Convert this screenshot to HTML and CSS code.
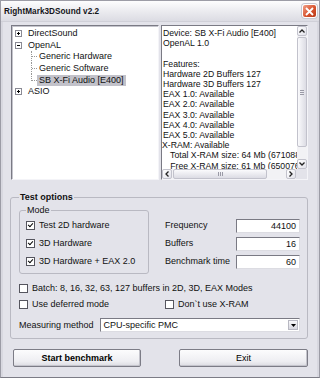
FILE: index.html
```html
<!DOCTYPE html>
<html lang="en">
<head>
    <meta charset="UTF-8">
    <title>RightMark3DSound v2.2</title>
    <link rel="stylesheet" href="styles.css">
</head>
<body>

    <div class="window">
        <!-- Title bar -->
        <div class="titlebar">
            <span class="title">RightMark3DSound v2.2</span>
            <span class="close-btn">
                <svg width="9" height="9" viewBox="0 0 9 9"><path d="M1 1L8 8M8 1L1 8" stroke="#fff" stroke-width="1.8"/></svg>
            </span>
        </div>

        <div class="client">
            <!-- Device tree + info -->
            <div class="panels">
                <div class="tree">
                    <div class="node">
                        <svg class="exp" width="7" height="7" viewBox="0 0 7 7"><rect x="0.5" y="0.5" width="6" height="6" fill="#fff" stroke="#8a8a94"/><path d="M2 3.5H5M3.5 2V5" stroke="#000"/></svg>
                        <span class="node-label">DirectSound</span>
                    </div>
                    <div class="node">
                        <svg class="exp" width="7" height="7" viewBox="0 0 7 7"><rect x="0.5" y="0.5" width="6" height="6" fill="#fff" stroke="#8a8a94"/><path d="M2 3.5H5" stroke="#000"/></svg>
                        <span class="node-label">OpenAL</span>
                    </div>
                    <div class="leaf"><span class="stub"></span><span class="node-label">Generic Hardware</span></div>
                    <div class="leaf"><span class="stub"></span><span class="node-label">Generic Software</span></div>
                    <div class="leaf last"><span class="stub"></span><span class="node-label selected">SB X-Fi Audio [E400]</span></div>
                    <div class="node">
                        <svg class="exp" width="7" height="7" viewBox="0 0 7 7"><rect x="0.5" y="0.5" width="6" height="6" fill="#fff" stroke="#8a8a94"/><path d="M2 3.5H5M3.5 2V5" stroke="#000"/></svg>
                        <span class="node-label">ASIO</span>
                    </div>
                </div>

                <div class="info">
                    <div class="info-view">
                        <div class="info-text">Device: SB X-Fi Audio [E400]
OpenAL 1.0

Features:
Hardware 2D Buffers 127
Hardware 3D Buffers 127
EAX 1.0: Available
EAX 2.0: Available
EAX 3.0: Available
EAX 4.0: Available
EAX 5.0: Available
<span class="flush">X-RAM: Available</span>
   Total X-RAM size: 64 Mb (67108864 bytes)
   Free X-RAM size: 61 Mb (65007616 bytes)</div>
                        <div class="vscroll">
                            <span class="sb-btn"><svg width="6" height="4" viewBox="0 0 6 4"><path d="M0.5 3.5L3 1L5.5 3.5" fill="none" stroke="#222" stroke-width="1.3"/></svg></span>
                            <div class="sb-track-v">
                                <span class="thumb-v"><span class="grip-v"></span></span>
                            </div>
                            <span class="sb-btn"><svg width="6" height="4" viewBox="0 0 6 4"><path d="M0.5 0.5L3 3L5.5 0.5" fill="none" stroke="#222" stroke-width="1.3"/></svg></span>
                        </div>
                    </div>
                    <div class="hscroll">
                        <span class="sb-btn"><svg width="4" height="6" viewBox="0 0 4 6"><path d="M3.5 0.5L1 3L3.5 5.5" fill="none" stroke="#222" stroke-width="1.3"/></svg></span>
                        <div class="sb-track-h">
                            <span class="thumb-h"><span class="grip-h"></span></span>
                        </div>
                        <span class="sb-btn"><svg width="4" height="6" viewBox="0 0 4 6"><path d="M0.5 0.5L3 3L0.5 5.5" fill="none" stroke="#222" stroke-width="1.3"/></svg></span>
                        <span class="sb-corner"></span>
                    </div>
                </div>
            </div>

            <!-- Test options -->
            <fieldset class="group options">
                <legend>Test options</legend>

                <div class="mode-row">
                    <fieldset class="group mode">
                        <legend>Mode</legend>
                        <div class="check-line"><span class="box checked"></span>Test 2D hardware</div>
                        <div class="check-line"><span class="box checked"></span>3D Hardware</div>
                        <div class="check-line"><span class="box checked"></span>3D Hardware + EAX 2.0</div>
                    </fieldset>

                    <div class="params">
                        <div class="param"><span class="param-label">Frequency</span><span class="field">44100</span></div>
                        <div class="param"><span class="param-label">Buffers</span><span class="field">16</span></div>
                        <div class="param"><span class="param-label">Benchmark time</span><span class="field">60</span></div>
                    </div>
                </div>

                <div class="opt-line batch"><span class="box"></span>Batch: 8, 16, 32, 63, 127 buffers in 2D, 3D, EAX Modes</div>
                <div class="opt-pair">
                    <div class="opt-line"><span class="box"></span>Use deferred mode</div>
                    <div class="opt-line"><span class="box"></span>Don`t use X-RAM</div>
                </div>

                <div class="method-row">
                    <span class="method-label">Measuring method</span>
                    <div class="select">
                        <span class="select-text">CPU-specific PMC</span>
                        <span class="select-btn"><svg width="5" height="3" viewBox="0 0 5 3"><path d="M0 0H5L2.5 3Z" fill="#000"/></svg></span>
                    </div>
                </div>
            </fieldset>

            <!-- Buttons -->
            <div class="buttons">
                <button class="btn btn-start">Start benchmark</button>
                <button class="btn">Exit</button>
            </div>
        </div>
    </div>

</body>
</html>
```

FILE: styles.css
```css
body {
    margin: 0;
    padding: 0;
    font-family: "Liberation Sans", Arial, sans-serif;
    font-size: 9px;
    color: #111;
    background: #ffffff;
}

/* Window frame */
.window {
    width: 320px;
    height: 378px;
    box-sizing: border-box;
    border: 1px solid #9c9ca6;
    border-bottom-color: #7c7c86;
    background: #e3e3ea;
    display: flex;
    flex-direction: column;
    overflow: hidden;
}

.titlebar {
    height: 20px;
    flex: none;
    display: flex;
    align-items: center;
    justify-content: space-between;
    padding: 0 2px 0 3px;
    background: linear-gradient(#fdfdfe, #ededf1 45%, #dcdce3);
    border-bottom: 1px solid #d0d0d8;
}

.title {
    font-weight: bold;
    font-size: 8.2px;
    color: #15151a;
    letter-spacing: 0.05px;
}

.close-btn {
    width: 15px;
    height: 14px;
    box-sizing: border-box;
    border: 1px solid #fff;
    border-radius: 3px;
    background: linear-gradient(135deg, #f0a088, #d8542f 55%, #b83818);
    display: flex;
    align-items: center;
    justify-content: center;
    box-shadow: 0 0 0 1px #c8c8d0;
}

.client {
    flex: 1;
    padding: 3px 9px 0 8px;
    border-left: 2px solid #d8d8e0;
    border-right: 2px solid #d8d8e0;
    display: flex;
    flex-direction: column;
}

/* Top panels */
.panels {
    display: flex;
    justify-content: space-between;
    height: 155px;
}

.tree {
    width: 148px;
    box-sizing: border-box;
    background: #fff;
    border: 1px solid #7a7a84;
    border-right-color: #f4f4f8;
    border-bottom-color: #f4f4f8;
    box-shadow: inset 1px 1px 0 #c4c4cc;
    padding: 2px 0 0 3px;
}

.node,
.leaf {
    height: 11.6px;
    display: flex;
    align-items: center;
}

.exp {
    flex: none;
    margin-right: 4px;
}

.node-label {
    padding: 0 2px;
    line-height: 11px;
}

.leaf {
    margin-left: 16px;
    border-left: 1px dotted #999;
}

.leaf.last {
    border-left: none;
    align-items: flex-start;
}

.stub {
    width: 5px;
    border-top: 1px dotted #999;
}

.leaf.last .stub {
    height: 5.5px;
    border-top: none;
    border-left: 1px dotted #999;
    border-bottom: 1px dotted #999;
}

.leaf.last .node-label {
    align-self: center;
    margin-top: 0.5px;
}

.selected {
    background: #c2c2ca;
}

.info {
    width: 147px;
    box-sizing: border-box;
    background: #fff;
    border: 1px solid #7a7a84;
    border-right-color: #f4f4f8;
    border-bottom-color: #f4f4f8;
    display: flex;
    flex-direction: column;
}

.info-view {
    flex: 1;
    display: flex;
    min-height: 0;
}

.info-text {
    flex: 1;
    overflow: hidden;
    white-space: pre;
    font-size: 8.7px;
    line-height: 10.2px;
    padding: 2px 0 0 1px;
}

.flush {
    margin-left: -1px;
}

/* Scroll bars */
.vscroll {
    width: 10px;
    flex: none;
    display: flex;
    flex-direction: column;
    background: #f2f2f5;
}

.hscroll {
    height: 10px;
    flex: none;
    display: flex;
    background: #f2f2f5;
}

.sb-btn {
    width: 10px;
    height: 10px;
    box-sizing: border-box;
    flex: none;
    border: 1px solid #c2c2cc;
    border-radius: 2px;
    background: linear-gradient(135deg, #ffffff, #e2e2ea);
    display: flex;
    align-items: center;
    justify-content: center;
}

.sb-track-v {
    flex: 1;
    padding: 1px 0 12px;
    display: flex;
}

.thumb-v {
    width: 10px;
    box-sizing: border-box;
    border: 1px solid #c2c2cc;
    border-radius: 2px;
    background: linear-gradient(90deg, #fafafc, #dcdce4);
    display: flex;
    align-items: center;
    justify-content: center;
}

.grip-v {
    width: 4px;
    height: 5px;
    background: repeating-linear-gradient(#9a9aa6 0 1px, transparent 1px 2px);
}

.sb-track-h {
    flex: 1;
    padding: 0 19px 0 1px;
    display: flex;
}

.thumb-h {
    flex: 1;
    box-sizing: border-box;
    border: 1px solid #c2c2cc;
    border-radius: 2px;
    background: linear-gradient(#fafafc, #dcdce4);
    display: flex;
    align-items: center;
    justify-content: center;
}

.grip-h {
    width: 5px;
    height: 4px;
    background: repeating-linear-gradient(90deg, #9a9aa6 0 1px, transparent 1px 2px);
}

.sb-corner {
    width: 11px;
    flex: none;
    background: #e3e3ea;
}

/* Group boxes */
.group {
    margin: 0;
    border: 1px solid #b9b9c2;
    border-radius: 3px;
    min-width: 0;
}

.group legend {
    padding: 0 1px;
    line-height: 11px;
}

.options {
    margin: 12px 0 0 -1px;
    padding: 2px 7px 3px 8px;
}

.options > legend {
    font-weight: bold;
}

.mode-row {
    display: flex;
}

.mode {
    width: 130px;
    box-sizing: border-box;
    padding: 0 0 3px 6px;
}

.check-line,
.opt-line {
    display: flex;
    align-items: center;
    height: 18px;
}

.box {
    width: 9px;
    height: 9px;
    box-sizing: border-box;
    flex: none;
    margin-right: 4px;
    background: #fff;
    border: 1px solid #55555e;
    display: flex;
    align-items: center;
    justify-content: center;
}

.box.checked::after {
    content: "";
    width: 4px;
    height: 2px;
    border-left: 1.5px solid #000;
    border-bottom: 1.5px solid #000;
    transform: rotate(-48deg);
    margin-top: -2px;
}

.params {
    flex: 1;
    margin: 11px 0 0 16px;
}

.param {
    height: 18px;
    display: flex;
    align-items: center;
    justify-content: space-between;
}

.field {
    width: 64px;
    height: 14px;
    box-sizing: border-box;
    margin-top: 2px;
    background: #fff;
    border: 1px solid #7a7a84;
    border-right-color: #dcdce2;
    border-bottom-color: #dcdce2;
    text-align: right;
    padding-right: 3px;
    line-height: 12px;
}

.opt-line {
    height: 16px;
}

.batch {
    margin-top: 6px;
}

.opt-pair {
    display: grid;
    grid-template-columns: 146px 1fr;
}

.method-row {
    display: flex;
    align-items: center;
    height: 20px;
    margin-top: 3px;
}

.method-label {
    width: 82px;
}

.select {
    width: 201px;
    height: 14px;
    box-sizing: border-box;
    background: #fff;
    border: 1px solid #7a7a84;
    border-right-color: #dcdce2;
    border-bottom-color: #dcdce2;
    display: flex;
    align-items: center;
}

.select-text {
    flex: 1;
    padding-left: 2px;
}

.select-btn {
    width: 10px;
    height: 10px;
    margin-right: 1px;
    box-sizing: border-box;
    border: 1px solid #b8b8c2;
    background: linear-gradient(#f8f8fa, #d8d8e0);
    display: flex;
    align-items: center;
    justify-content: center;
}

/* Buttons */
.buttons {
    display: flex;
    justify-content: space-between;
    margin-top: 10px;
    padding-left: 2px;
}

.btn {
    width: 129px;
    height: 18px;
    padding: 0;
    font-family: "Liberation Sans", Arial, sans-serif;
    font-size: 9px;
    color: #000;
    background: linear-gradient(#fcfcfd, #eeeef2 70%, #dcdce2);
    border: 1px solid #7c7c86;
    border-radius: 2px;
    box-shadow: inset -1px -1px 0 #c4c4cc;
}

.btn-start {
    width: 128px;
    font-weight: bold;
}
```
